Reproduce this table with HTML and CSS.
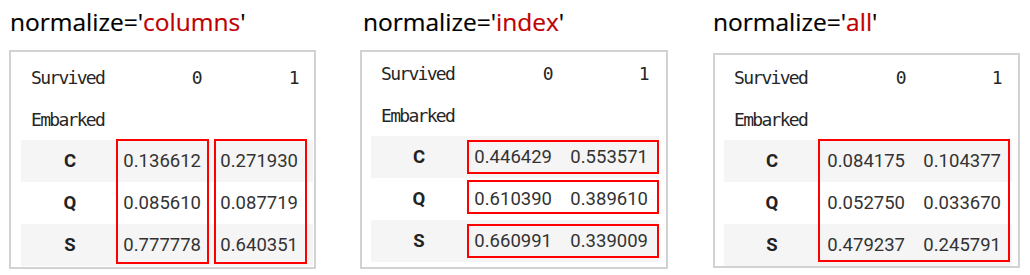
FILE: index.html
```html
<!DOCTYPE html>
<html lang="en">
<head>
<meta charset="utf-8">
<title>crosstab normalize</title>
<link rel="stylesheet" href="styles.css">
</head>
<body>
<div class="figure">
  <section class="col col-1">
    <h2 class="title">normalize='<span class="hl">columns</span>'</h2>
    <div class="panel panel-1">
      <table class="ct">
        <thead>
          <tr><th class="lbl">Survived</th><th class="h">0</th><th class="h">1</th></tr>
          <tr><th class="lbl">Embarked</th><th class="h"></th><th class="h"></th></tr>
        </thead>
        <tbody>
          <tr class="odd"><th class="rl">C</th><td>0.136612</td><td>0.271930</td></tr>
          <tr><th class="rl">Q</th><td>0.085610</td><td>0.087719</td></tr>
          <tr class="odd"><th class="rl">S</th><td>0.777778</td><td>0.640351</td></tr>
        </tbody>
      </table>
      <div class="mark m1a"></div>
      <div class="mark m1b"></div>
    </div>
  </section>

  <section class="col col-2">
    <h2 class="title">normalize='<span class="hl">index</span>'</h2>
    <div class="panel panel-2">
      <table class="ct">
        <thead>
          <tr><th class="lbl">Survived</th><th class="h">0</th><th class="h">1</th></tr>
          <tr><th class="lbl">Embarked</th><th class="h"></th><th class="h"></th></tr>
        </thead>
        <tbody>
          <tr class="odd"><th class="rl">C</th><td>0.446429</td><td>0.553571</td></tr>
          <tr><th class="rl">Q</th><td>0.610390</td><td>0.389610</td></tr>
          <tr class="odd"><th class="rl">S</th><td>0.660991</td><td>0.339009</td></tr>
        </tbody>
      </table>
      <div class="mark m2a"></div>
      <div class="mark m2b"></div>
      <div class="mark m2c"></div>
    </div>
  </section>

  <section class="col col-3">
    <h2 class="title">normalize='<span class="hl">all</span>'</h2>
    <div class="panel panel-3">
      <table class="ct">
        <thead>
          <tr><th class="lbl">Survived</th><th class="h">0</th><th class="h">1</th></tr>
          <tr><th class="lbl">Embarked</th><th class="h"></th><th class="h"></th></tr>
        </thead>
        <tbody>
          <tr class="odd"><th class="rl">C</th><td>0.084175</td><td>0.104377</td></tr>
          <tr><th class="rl">Q</th><td>0.052750</td><td>0.033670</td></tr>
          <tr class="odd"><th class="rl">S</th><td>0.479237</td><td>0.245791</td></tr>
        </tbody>
      </table>
      <div class="mark m3a"></div>
    </div>
  </section>
</div>
</body>
</html>
```

FILE: styles.css
```css
html, body {
  margin: 0;
  padding: 0;
  background: #ffffff;
}

.figure {
  display: flex;
  align-items: flex-start;
  padding-left: 9px;
}

.col-1 { width: 307px; margin-right: 44px; }
.col-2 { width: 308px; margin-right: 45px; }
.col-3 { width: 307px; }

.title {
  margin: 6px 0 12px 1px;
  font-family: "Open Sans", "Noto Sans", sans-serif;
  font-weight: 400;
  font-size: 24.5px;
  line-height: 32px;
  color: #000000;
  white-space: nowrap;
  -webkit-text-stroke: 0.2px #000000;
}
.col-2 .title { margin-left: 3px; }
.col-3 .title { margin-left: 0; margin-bottom: 15px; }

.hl { color: #c00000; -webkit-text-stroke: 0.2px #c00000; }

.panel {
  position: relative;
  border: 2px solid #d2d2d2;
}
.panel-1 { padding: 4px 0 1px 10px; }
.panel-2 { padding: 0 0 5px 9px; }
.panel-3 { padding: 1px 0 0 9px; }

.ct {
  border-collapse: collapse;
  border-spacing: 0;
  table-layout: fixed;
  width: 288px;
}
.panel-1 .ct { width: 292px; }

.ct th,
.ct td {
  height: 42px;
  padding: 0;
  vertical-align: middle;
}

.ct th.lbl {
  width: 86px;
  padding-left: 10px;
  text-align: left;
}
.ct th.h {
  width: 85px;
  padding-right: 11px;
  text-align: right;
}
.panel-1 .ct th.lbl { width: 88px; }
.panel-1 .ct th.h { width: 82px; padding-right: 15px; }

.ct thead th {
  font-family: "DejaVu Sans Mono", monospace;
  font-weight: 400;
  font-size: 18px;
  letter-spacing: -1.7px;
  color: #262626;
}

.ct th.rl {
  font-family: Roboto, "Liberation Sans", sans-serif;
  font-weight: 700;
  font-size: 18.5px;
  color: #222222;
  text-align: center;
}

.ct td {
  font-family: Roboto, "Liberation Sans", sans-serif;
  font-size: 18.5px;
  color: #333333;
  text-align: right;
  padding-right: 11px;
}
.panel-1 .ct td { padding-right: 15px; }

.ct tr.odd { background: #f5f5f5; }

.mark {
  position: absolute;
  border: 2px solid #ff0000;
  box-sizing: border-box;
}
.m1a { left: 105px; top: 87px; width: 93px; height: 125px; }
.m1b { left: 203px; top: 87px; width: 93px; height: 125px; }

.m2a { left: 105px; top: 88px; width: 192px; height: 34px; }
.m2b { left: 105px; top: 128px; width: 192px; height: 34px; }
.m2c { left: 105px; top: 172px; width: 192px; height: 34px; }

.m3a { left: 103px; top: 84px; width: 192px; height: 123px; }
```
